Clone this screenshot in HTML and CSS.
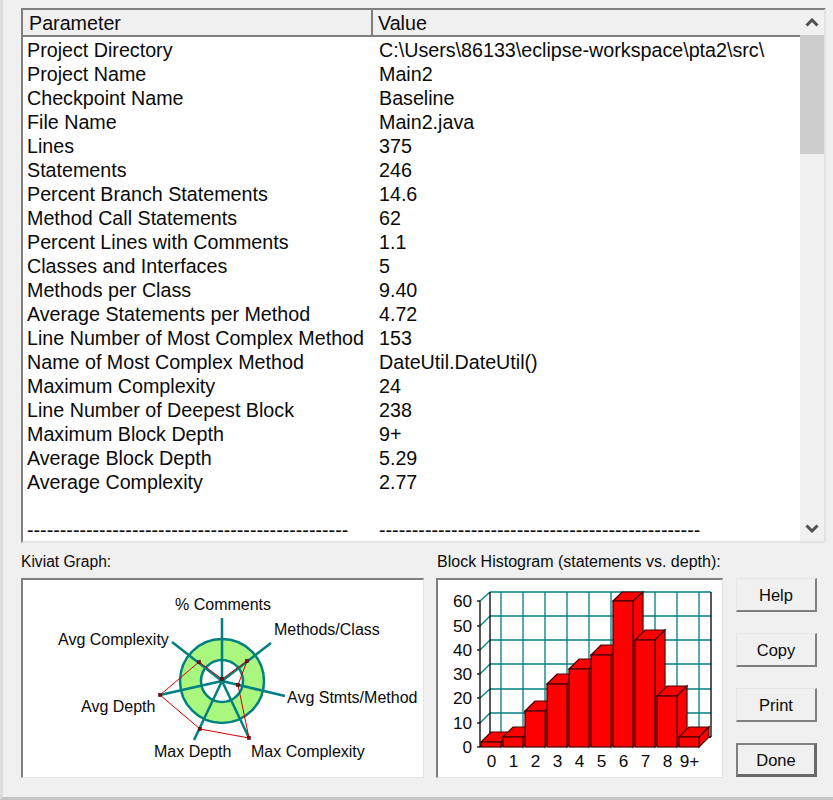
FILE: index.html
```html
<!DOCTYPE html>
<html lang="en">
<head>
    <meta charset="UTF-8">
    <title>Checkpoint Details</title>
    <link rel="stylesheet" href="styles.css">
</head>
<body>
    <div class="window">
        <div class="list-frame">
            <div class="list-main">
                <div class="list-header">
                    <div class="head-cell head-param">Parameter</div>
                    <div class="head-cell head-value">Value</div>
                </div>
                <div class="list-rows">
                    <div class="row"><span>Project Directory</span><span>C:\Users\86133\eclipse-workspace\pta2\src\</span></div>
                    <div class="row"><span>Project Name</span><span>Main2</span></div>
                    <div class="row"><span>Checkpoint Name</span><span>Baseline</span></div>
                    <div class="row"><span>File Name</span><span>Main2.java</span></div>
                    <div class="row"><span>Lines</span><span>375</span></div>
                    <div class="row"><span>Statements</span><span>246</span></div>
                    <div class="row"><span>Percent Branch Statements</span><span>14.6</span></div>
                    <div class="row"><span>Method Call Statements</span><span>62</span></div>
                    <div class="row"><span>Percent Lines with Comments</span><span>1.1</span></div>
                    <div class="row"><span>Classes and Interfaces</span><span>5</span></div>
                    <div class="row"><span>Methods per Class</span><span>9.40</span></div>
                    <div class="row"><span>Average Statements per Method</span><span>4.72</span></div>
                    <div class="row"><span>Line Number of Most Complex Method</span><span>153</span></div>
                    <div class="row"><span>Name of Most Complex Method</span><span>DateUtil.DateUtil()</span></div>
                    <div class="row"><span>Maximum Complexity</span><span>24</span></div>
                    <div class="row"><span>Line Number of Deepest Block</span><span>238</span></div>
                    <div class="row"><span>Maximum Block Depth</span><span>9+</span></div>
                    <div class="row"><span>Average Block Depth</span><span>5.29</span></div>
                    <div class="row"><span>Average Complexity</span><span>2.77</span></div>
                    <div class="row"><span>&nbsp;</span><span>&nbsp;</span></div>
                    <div class="row"><span>-------------------------------------------------</span><span>-------------------------------------------------</span></div>
                </div>
            </div>
            <div class="scrollbar">
                <div class="scroll-btn">
                    <svg width="14" height="9" viewBox="0 0 14 9"><path d="M1.500 7.500 L7 2 L12.500 7.500" class="chevron"/></svg>
                </div>
                <div class="scroll-track"><div class="scroll-thumb"></div></div>
                <div class="scroll-btn">
                    <svg width="14" height="9" viewBox="0 0 14 9"><path d="M1.500 1.500 L7 7 L12.500 1.500" class="chevron"/></svg>
                </div>
            </div>
        </div>

        <div class="lower">
            <div class="panel panel-kiviat">
                <div class="panel-title">Kiviat Graph:</div>
                <div class="sunken">
                    <svg width="400" height="197" viewBox="23 580 400 197" class="chart">
                        <circle cx="222" cy="681" r="32" class="ring"/>
                        <circle cx="222" cy="681" r="42" class="ring-line"/>
                        <circle cx="222" cy="681" r="21" class="ring-line"/>
                        <path class="spoke" d="M222 681 L222 618 M222 681 L271 643 M222 681 L285 696 M222 681 L249 738 M222 681 L194 740 M222 681 L160 695 M222 681 L172 642"/>
                        <polygon class="kiviat-poly" points="222,679 247,661 238,685 249,738 200,729 160,695 199,662"/>
                        <g class="kiviat-marks">
                            <rect x="220.500" y="677.500" width="3" height="3"/>
                            <rect x="245.500" y="659.500" width="3" height="3"/>
                            <rect x="236.500" y="683.500" width="3" height="3"/>
                            <rect x="247.500" y="736.500" width="3" height="3"/>
                            <rect x="198.500" y="727.500" width="3" height="3"/>
                            <rect x="158.500" y="693.500" width="3" height="3"/>
                            <rect x="197.500" y="660.500" width="3" height="3"/>
                        </g>
                        <text x="175" y="610">% Comments</text>
                        <text x="274" y="635">Methods/Class</text>
                        <text x="58" y="645">Avg Complexity</text>
                        <text x="287" y="703">Avg Stmts/Method</text>
                        <text x="81" y="712">Avg Depth</text>
                        <text x="154" y="757">Max Depth</text>
                        <text x="251" y="757">Max Complexity</text>
                    </svg>
                </div>
            </div>
            <div class="panel panel-hist">
                <div class="panel-title hist-title">Block Histogram (statements vs. depth):</div>
                <div class="sunken">
                    <svg id="hist" width="284" height="197" viewBox="438 580 284 197" class="chart hist-chart"></svg>
                </div>
            </div>
            <div class="buttons">
                <button class="btn">Help</button>
                <button class="btn">Copy</button>
                <button class="btn">Print</button>
                <button class="btn btn-default">Done</button>
            </div>
        </div>
    </div>
    <script src="chart.js"></script>
</body>
</html>
```

FILE: styles.css
```css
html, body {
    margin: 0;
    padding: 0;
}

body {
    width: 833px;
    height: 800px;
    background-color: #f0f0f0;
    font-family: "Liberation Sans", Arial, sans-serif;
    color: #0a0a0a;
    overflow: hidden;
}

.window {
    width: 833px;
    height: 800px;
    box-sizing: border-box;
    padding: 8px 7px 0 18px;
    border-bottom: 3px solid #c4c4c4;
    border-left: 3px solid #dcdcdc;
}

.list-frame {
    display: flex;
    height: 535px;
    box-sizing: border-box;
    border-top: 2px solid #7f7f7f;
    border-left: 2px solid #7f7f7f;
    border-right: 2px solid #e3e3e3;
    border-bottom: 2px solid #e3e3e3;
    background: #fff;
}

.list-main {
    width: 777px;
    overflow: hidden;
}

.list-header {
    display: flex;
    height: 25px;
    background: #f0f0f0;
    border-bottom: 2px solid #7f7f7f;
    font-size: 19.700px;
    line-height: 26px;
}

.head-cell {
    box-sizing: border-box;
    padding-left: 6px;
}

.head-param {
    width: 350px;
    border-right: 2px solid #7f7f7f;
}

.head-value {
    flex: 1;
    padding-left: 5px;
}

.list-rows {
    padding-top: 1px;
    overflow: hidden;
}

.row {
    display: grid;
    grid-template-columns: 352px 1fr;
    padding-left: 4px;
    height: 24px;
    font-size: 19.700px;
    line-height: 24px;
    white-space: nowrap;
}

.scrollbar {
    flex: 1;
    display: flex;
    flex-direction: column;
    background: #f0f0f0;
}

.scroll-btn {
    height: 25px;
    display: flex;
    align-items: center;
    justify-content: center;
}

.chevron {
    fill: none;
    stroke: #505050;
    stroke-width: 3;
}

.scroll-track {
    flex: 1;
}

.scroll-thumb {
    height: 119px;
    background: #cdcdcd;
}

.lower {
    display: flex;
    margin-top: 8px;
}

.panel-title {
    height: 27px;
    font-size: 15.600px;
    line-height: 22px;
}

.hist-title {
    padding-left: 1px;
    font-size: 16px;
    white-space: nowrap;
}

.panel-kiviat {
    width: 415px;
}

.panel-hist {
    width: 300px;
}

.panel-kiviat .sunken {
    width: 403px;
}

.panel-hist .sunken {
    width: 287px;
}

.sunken {
    box-sizing: border-box;
    height: 200px;
    background: #fff;
    border-top: 2px solid #7f7f7f;
    border-left: 2px solid #7f7f7f;
    border-right: 1px solid #e3e3e3;
    border-bottom: 1px solid #e3e3e3;
}

.chart {
    display: block;
}

.chart text {
    font-size: 16px;
    fill: #0a0a0a;
}

.hist-chart text {
    font-size: 17.200px;
}

.ring {
    fill: none;
    stroke: #a9f77e;
    stroke-width: 21;
}

.ring-line,
.spoke {
    fill: none;
    stroke: #008080;
    stroke-width: 2.500;
}

.kiviat-poly {
    fill: none;
    stroke: #d00000;
    stroke-width: 1;
}

.kiviat-marks rect {
    fill: #a00000;
    stroke: #200000;
    stroke-width: 0.500;
}

.grid-line {
    fill: none;
    stroke: #008080;
    stroke-width: 1.300;
}

.axis {
    fill: none;
    stroke: #000;
    stroke-width: 1.300;
}

.bar {
    fill: #ff0000;
    stroke: #400000;
    stroke-width: 1.200;
}

.buttons {
    display: flex;
    flex-direction: column;
    gap: 21px;
    padding-top: 27px;
}

.btn {
    width: 81px;
    height: 34px;
    padding: 2px 0 0;
    background: #f0f0f0;
    font-family: inherit;
    font-size: 16.500px;
    color: #0a0a0a;
    border-top: 1px solid #e6e6e6;
    border-left: 1px solid #e6e6e6;
    border-right: 2px solid #7f7f7f;
    border-bottom: 2px solid #7f7f7f;
}

.btn-default {
    border: 2px solid #808080;
    border-right: 3px solid #6a6a6a;
    border-bottom: 3px solid #6a6a6a;
}
```

FILE: chart.js
```js
// block histogram, coordinates are the same as the window
const svg = document.getElementById('hist');
const NS = 'http://www.w3.org/2000/svg';

function add(tag, attrs, text) {
    const el = document.createElementNS(NS, tag);
    Object.keys(attrs).forEach(k => el.setAttribute(k, attrs[k]));
    if (text) el.textContent = text;
    svg.appendChild(el);
    return el;
}

const backY = [592, 616, 640, 664, 689, 713];
const frontY = [601, 626, 650, 674, 698, 723, 747];
const backX = [501, 523, 545, 567, 589, 611, 633, 655, 677, 699];

backY.forEach(y => add('path', { class: 'grid-line', d: `M490 ${y} H711` }));
backX.forEach(x => add('path', { class: 'grid-line', d: `M${x} 592 V737` }));

// side wall joins the back wall to the front axis
backY.forEach((y, i) => add('path', { class: 'grid-line', d: `M490 ${y} L480 ${frontY[i]}` }));
add('path', { class: 'axis', d: 'M490 592 V737 M711 592 V737 M480 601 V747' });
frontY.forEach(y => add('path', { class: 'axis', d: `M477 ${y} H480` }));
add('path', { class: 'axis', d: 'M490 737 H711 M490 737 L480 747' });

['60', '50', '40', '30', '20', '10', '0'].forEach((t, i) => {
    add('text', { x: 472, y: frontY[i] + 6, 'text-anchor': 'end' }, t);
});

const tops = [742, 737, 711, 684, 669, 655, 601, 640, 696, 737];
const labels = ['0', '1', '2', '3', '4', '5', '6', '7', '8', '9+'];

tops.forEach((top, i) => {
    const x = 481 + i * 22;
    const w = 20;
    const d = 10;
    const capY = Math.max(top - d, 592);
    const capD = top - capY;
    add('polygon', { class: 'bar', points: `${x},${top} ${x + capD},${capY} ${x + w + d},${capY} ${x + w},${top}` });
    add('polygon', { class: 'bar', points: `${x + w},${top} ${x + w + d},${capY} ${x + w + d},737 ${x + w},747` });
    add('rect', { class: 'bar', x: x, y: top, width: w, height: 747 - top });
    add('text', { x: x + 10.5, y: 767, 'text-anchor': 'middle' }, labels[i]);
});
```
